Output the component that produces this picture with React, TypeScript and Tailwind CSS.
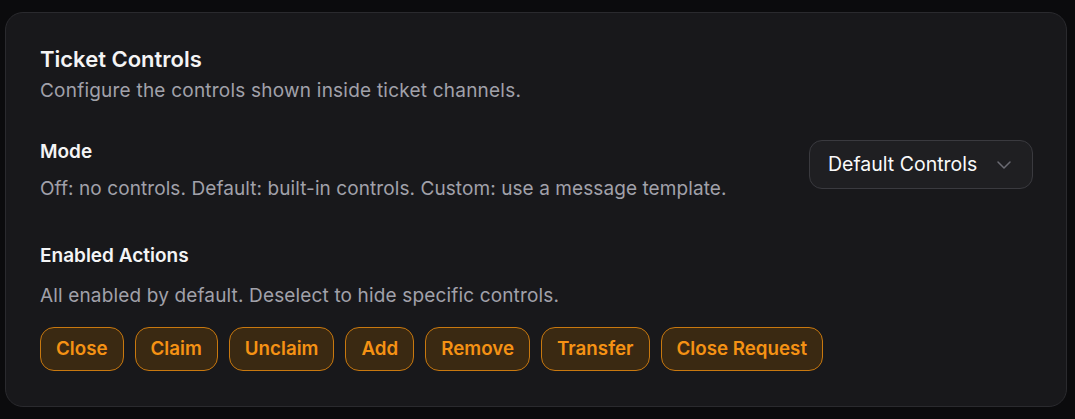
import React from "react";

const actions = ["Close", "Claim", "Unclaim", "Add", "Remove", "Transfer", "Close Request"];

export default function App() {
  return (
    <div
      className="w-[1075px] h-[419px] bg-[#0b0b0d] pt-[12px] pl-[5px] pr-[8px]"
      style={{ fontFamily: "Inter, 'Noto Sans', sans-serif" }}
    >
      <div className="h-[395px] rounded-[18px] border border-[#2a2a2e] bg-[#18181b] pl-[34px] pr-[33px] pt-[34px]">
        <h2 className="text-[22px] leading-[24px] font-semibold text-[#f4f4f5]">Ticket Controls</h2>
        <p className="mt-[9px] text-[19px] leading-[22px] tracking-[0.22px] text-[#a1a1aa]">
          Configure the controls shown inside ticket channels.
        </p>

        <div className="mt-[39px] flex items-start justify-between">
          <div>
            <div className="text-[19px] leading-[22px] font-semibold text-[#f4f4f5]">Mode</div>
            <p className="mt-[15px] text-[19px] leading-[22px] tracking-[0.08px] text-[#a1a1aa]">
              Off: no controls. Default: built-in controls. Custom: use a message template.
            </p>
          </div>
          <button className="mt-[-1px] flex h-[49px] w-[224px] items-center justify-between rounded-[13px] border border-[#3a3a3f] bg-[#1f1f22] pl-[18px] pr-[16px] text-[19.5px] text-[#fafafa]">
            <span>Default Controls</span>
            <svg width="24" height="24" viewBox="0 0 24 24" fill="none" stroke="#6b6b73" strokeWidth="1.5" strokeLinecap="round" strokeLinejoin="round">
              <path d="m6 9 6 6 6-6" />
            </svg>
          </button>
        </div>

        <div className="mt-[45px] text-[19px] leading-[22px] font-semibold text-[#f4f4f5]">Enabled Actions</div>
        <p className="mt-[18px] text-[19px] leading-[22px] tracking-[0.15px] text-[#a1a1aa]">
          All enabled by default. Deselect to hide specific controls.
        </p>

        <div className="mt-[20px] flex gap-[11px]">
          {actions.map((a) => (
            <button
              key={a}
              className="h-[44px] rounded-[14px] border border-[#c8780f] bg-[#3a2912] px-[15px] text-[18.75px] font-semibold text-[#f59214]"
            >
              {a}
            </button>
          ))}
        </div>
      </div>
    </div>
  );
}
